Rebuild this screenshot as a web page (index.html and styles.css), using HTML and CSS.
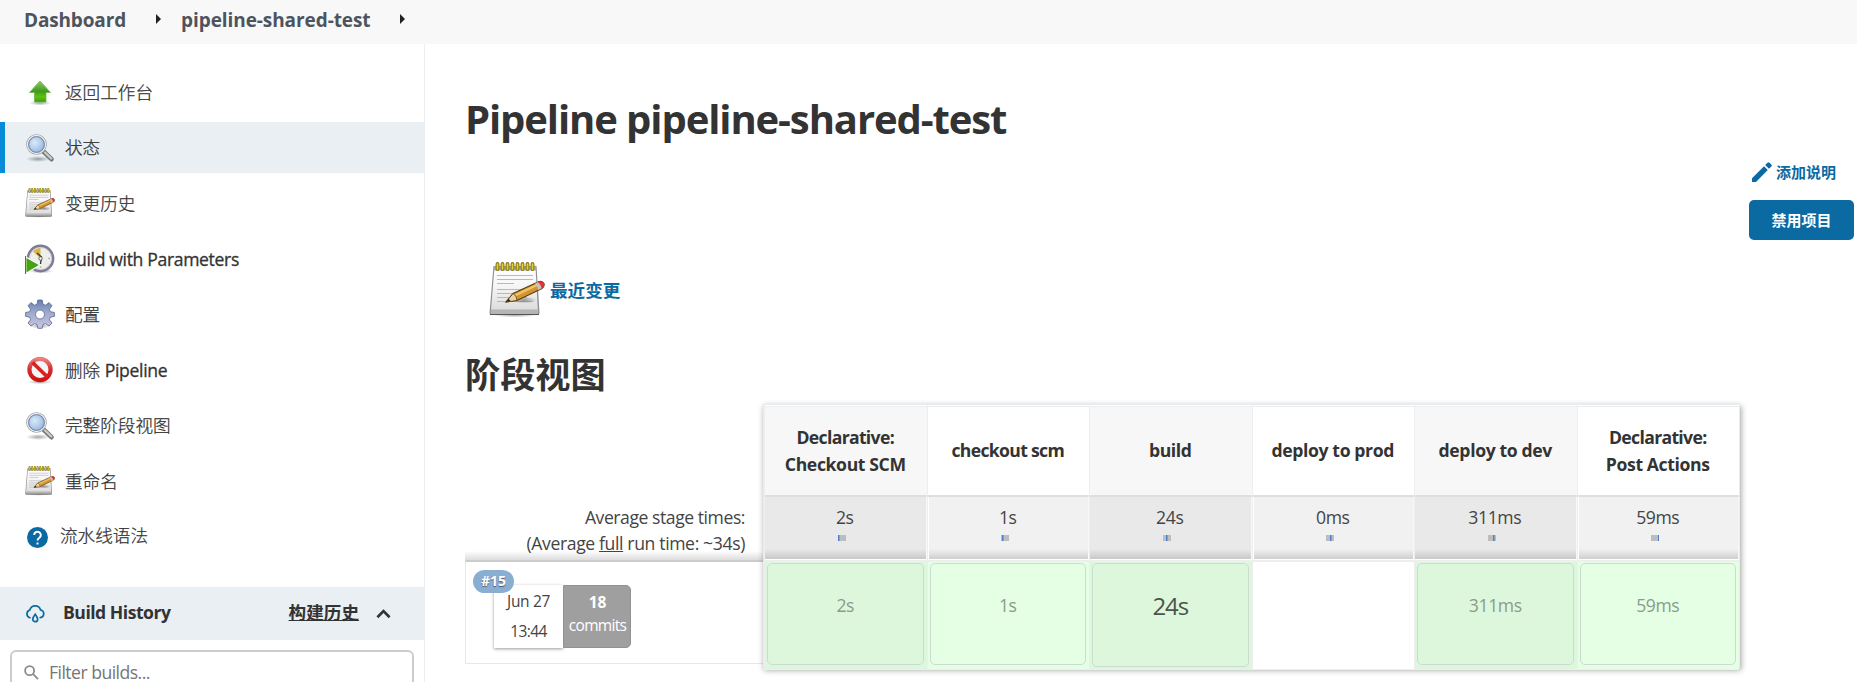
FILE: index.html
```html
<!DOCTYPE html>
<html lang="zh-CN">
<head>
<meta charset="utf-8">
<title>pipeline-shared-test [Jenkins]</title>
<link rel="stylesheet" href="styles.css">
</head>
<body>
<svg class="defs" width="0" height="0" aria-hidden="true">
  <defs>
    <linearGradient id="gGreen" x1="0" y1="0" x2="0" y2="1"><stop offset="0" stop-color="#8fc96a"/><stop offset=".5" stop-color="#3f9a1c"/><stop offset=".75" stop-color="#5cc40f"/><stop offset="1" stop-color="#3d9a10"/></linearGradient>
    <linearGradient id="gPaper" x1="0" y1="0" x2="0" y2="1"><stop offset="0" stop-color="#fff"/><stop offset=".4" stop-color="#f6f6f6"/><stop offset="1" stop-color="#d9d9d9"/></linearGradient>
    <linearGradient id="gGear" x1="0" y1="0" x2="0" y2="1"><stop offset="0" stop-color="#5f7fae"/><stop offset=".45" stop-color="#9fabcb"/><stop offset="1" stop-color="#cbc4e2"/></linearGradient>
    <linearGradient id="gRed" x1="0" y1="0" x2="0" y2="1"><stop offset="0" stop-color="#e98080"/><stop offset=".5" stop-color="#d42c2c"/><stop offset="1" stop-color="#d01414"/></linearGradient>
    <radialGradient id="gLens" cx=".4" cy=".4" r=".65"><stop offset="0" stop-color="#dbe9f8"/><stop offset="1" stop-color="#8fb4de"/></radialGradient>
    <radialGradient id="gShade"><stop offset="0" stop-color="#000" stop-opacity=".35"/><stop offset="1" stop-color="#000" stop-opacity="0"/></radialGradient>
  </defs>
  <symbol id="up" viewBox="0 0 30 30">
    <ellipse cx="15" cy="26" rx="11" ry="2.5" fill="url(#gShade)"/>
    <path d="M15 4 25.500 15.500H21V25H9.500v-9.500H4.500z" fill="url(#gGreen)" stroke="#6db548" stroke-width=".8"/>
  </symbol>
  <symbol id="search" viewBox="0 0 30 30">
    <ellipse cx="13" cy="26" rx="12" ry="3" fill="url(#gShade)"/>
    <path d="m18.500 18.500 8 7.700" stroke="#777" stroke-width="4.600" stroke-linecap="round"/>
    <path d="m20 19.500 6.300 6" stroke="#ccc" stroke-width="2.200" stroke-linecap="round"/>
    <circle cx="11.500" cy="11.500" r="9" fill="url(#gLens)" stroke="#9a9a9a" stroke-width="2.600"/>
    <circle cx="11.500" cy="11.500" r="9" fill="none" stroke="#eee" stroke-width="1.300"/>
    <circle cx="11.500" cy="11.500" r="7.800" fill="none" stroke="#5d85bd" stroke-width=".9"/>
  </symbol>
  <symbol id="notepad" viewBox="0 0 56 56">
    <ellipse cx="26" cy="53" rx="22" ry="2.500" fill="url(#gShade)"/>
    <path d="M4.500 4h43l3 47q0 2-2 2h-46q-2 0-2-2z" fill="#8c8c8c"/>
    <path d="M5.500 5h41l2.600 46.500H1.700z" fill="url(#gPaper)"/>
    <path d="M5 4.500h42l.2 4H4.500z" fill="#aaa"/>
    <path d="M2 47.500h47.300v3.500H2z" fill="#b5b5b5"/>
    <path d="M1 52.500h49" stroke="#555"/>
    <path d="M8 13.500h36M8 17.500h36M8 21.500h17M8 27.500h36M8 31.500h33M8 35.500h30M8 39.500h36" stroke="#b9b9b9" stroke-width="1.200"/>
    <path d="M8.500 2v5M13.500 2v5M18.500 2v5M23.500 2v5M28.500 2v5M33.500 2v5M38.500 2v5M43.500 2v5" stroke="#857716" stroke-width="3.800" stroke-linecap="round"/>
    <path d="M8.500 2v5M13.500 2v5M18.500 2v5M23.500 2v5M28.500 2v5M33.500 2v5M38.500 2v5M43.500 2v5" stroke="#e3d02c" stroke-width="1.700" stroke-linecap="round"/>
    <ellipse cx="35" cy="38" rx="13" ry="3.500" fill="url(#gShade)"/>
    <path d="m17 40 7-8.500L49 20q4-2 6 1.500.8 3-2 5L28 38.500z" fill="#d3962f" stroke="#5a3c10" stroke-width="1.100"/>
    <path d="m26 33.500 23-11" stroke="#efc56b" stroke-width="2"/>
    <path d="m17 40 7-8.500q4 2 4 7z" fill="#ead3a0" stroke="#5a3c10" stroke-width=".8"/>
    <path d="m17 40 2.500-3.200 2 2.200z" fill="#222"/>
    <path d="m46 21.500 3-1.500q3 3 3.500 6.500L49 28q0-4-3-6.500z" fill="#bfc4cc"/>
    <path d="M49 20q4-2 6 1.500.8 3-2 5-1-4-4-6.500z" fill="#e5303a"/>
  </symbol>
  <symbol id="clock" viewBox="0 0 30 30">
    <ellipse cx="16" cy="27" rx="12" ry="2.500" fill="url(#gShade)"/>
    <circle cx="15.500" cy="14.500" r="12.600" fill="#efefea" stroke="#7d7b98" stroke-width="2.600"/>
    <circle cx="15.500" cy="14.500" r="11" fill="none" stroke="#c9c9cf" stroke-width=".8"/>
    <path d="M15.500 14.500 8 7.500q3-3.500 7.500-3.500z" fill="#dcb54a"/>
    <path d="m12 9 4.500 4-1 7" fill="none" stroke="#333" stroke-width="1.300"/>
    <circle cx="15.500" cy="14.500" r="1.700" fill="#fff" stroke="#444" stroke-width=".8"/>
    <circle cx="24" cy="14.500" r=".8" fill="#999"/><circle cx="15.500" cy="23" r=".8" fill="#999"/>
    <path d="M.8 13v16.500L15 21z" fill="#46a313" stroke="#fff" stroke-width="1.200"/>
    <path d="M.5 12v18" stroke="#398a10" stroke-width="1"/>
  </symbol>
  <symbol id="gear" viewBox="0 0 30 30">
    <ellipse cx="15" cy="27" rx="11" ry="2.500" fill="url(#gShade)"/>
    <path fill-rule="evenodd" d="M12.800 1h4.400l.8 4.300 2.500 1L24 3.600 27 6.700l-2.600 3.500 1 2.500 4 .8v3.800l-4 .9-1 2.500L27 24.100 24 27l-3.500-2.400-2.500 1-.8 3.700h-4.400l-.8-3.700-2.500-1L6 27l-3-2.900 2.600-3.400-1-2.500-4-.9v-3.800l4-.8 1-2.500L3 6.700l3-3.100 3.500 2.700 2.500-1zM15 11a4.500 4.500 0 1 0 0 9 4.500 4.500 0 0 0 0-9z" fill="url(#gGear)" stroke="#64729b" stroke-width=".9"/>
  </symbol>
  <symbol id="stop" viewBox="0 0 30 30">
    <ellipse cx="15" cy="27" rx="12" ry="2.200" fill="url(#gShade)"/>
    <circle cx="15" cy="14.500" r="10.600" fill="#f6f4f4" stroke="url(#gRed)" stroke-width="4.200"/>
    <path d="m7.500 7.500 15 14.500" stroke="#d62222" stroke-width="3.800"/>
  </symbol>
</svg>

<header class="crumbs">
  <a class="crumb">Dashboard</a><i class="crumb-arrow"></i>
  <a class="crumb job">pipeline-shared-test</a><i class="crumb-arrow last"></i>
</header>

<div class="page">
  <aside class="sidebar">
    <nav class="tasks">
      <a class="task"><svg class="task-icon"><use href="#up"/></svg><span>返回工作台</span></a>
      <a class="task active"><svg class="task-icon"><use href="#search"/></svg><span>状态</span></a>
      <a class="task"><svg class="task-icon"><use href="#notepad"/></svg><span>变更历史</span></a>
      <a class="task latin"><svg class="task-icon"><use href="#clock"/></svg><span><b>Build with Parameters</b></span></a>
      <a class="task"><svg class="task-icon"><use href="#gear"/></svg><span>配置</span></a>
      <a class="task latin"><svg class="task-icon"><use href="#stop"/></svg><span>删除 <b>Pipeline</b></span></a>
      <a class="task"><svg class="task-icon"><use href="#search"/></svg><span>完整阶段视图</span></a>
      <a class="task"><svg class="task-icon"><use href="#notepad"/></svg><span>重命名</span></a>
      <a class="task help"><svg class="help-icon" viewBox="0 0 21 21"><circle cx="10.500" cy="10.500" r="10.500" fill="#0b6aa2"/><path d="M7.200 8a3.300 3.300 0 1 1 5.200 2.700c-1.200.9-1.900 1.400-1.900 2.800" fill="none" stroke="#fff" stroke-width="2"/><path d="M9.500 15.500h2v2h-2z" fill="#fff"/></svg><span>流水线语法</span></a>
    </nav>
    <section class="history">
      <div class="history-head">
        <svg class="cloud" viewBox="0 0 20 19" fill="none" stroke="#0b6aa2" stroke-width="1.700" stroke-linecap="round"><path d="M5 13.700A4 4 0 0 1 4.800 6 5.600 5.600 0 0 1 15.600 6a3.900 3.900 0 0 1-.4 7.700"/><path d="M10.200 10.200c1.500 2 2.500 3.500 2.500 5a2.500 2.500 0 0 1-5 0c0-1.500 1-3 2.500-5z"/></svg>
        <span class="history-title">Build History</span>
        <a class="trend">构建历史</a>
        <svg class="chevron" viewBox="0 0 16 10"><path d="m1.500 8.500 6.500-6.500 6.500 6.500" fill="none" stroke="#333" stroke-width="2.800"/></svg>
      </div>
      <div class="filter">
        <svg class="filter-icon" viewBox="0 0 16 16" fill="none" stroke="#8b8b8b" stroke-width="1.900"><circle cx="6" cy="6" r="4.800"/><path d="m9.500 9.500 5.500 5.500"/></svg>
        <span class="filter-text">Filter builds...</span>
      </div>
    </section>
  </aside>

  <main class="main">
    <h1 class="title">Pipeline pipeline-shared-test</h1>
    <div class="actions">
      <a class="edit"><svg class="pencil" viewBox="0 0 20 20" fill="#0b6aa2"><path d="M0 16.200 12 4.200 15.800 8 4 20H0zM13.200 3 15.500.7q1-1 2 0l1.800 1.800q1 1 0 2L17 6.800z"/></svg>添加说明</a>
      <button class="disable">禁用项目</button>
    </div>
    <a class="recent"><svg class="recent-icon"><use href="#notepad"/></svg>最近变更</a>
    <h2 class="subtitle">阶段视图</h2>

    <div class="stage-view">
      <div class="runs">
        <div class="averages"><span class="tight">Average stage times:</span><span>(Average <u>full</u> run time: ~34s)</span></div>
        <div class="run">
          <div class="run-card">
            <span class="badge">#15</span>
            <div class="date"><span>Jun 27</span><span class="time">13:44</span></div>
            <div class="commits"><b>18</b><span>commits</span></div>
          </div>
        </div>
      </div>
      <div class="stages">
        <div class="stage"><div class="name"><span class="tight">Declarative:</span><span>Checkout SCM</span></div><div class="avg">2s<i class="bar p0"></i></div><div class="cell"><div class="result">2s</div></div></div>
        <div class="stage even"><div class="name"><span class="tight">checkout scm</span></div><div class="avg">1s<i class="bar p1"></i></div><div class="cell"><div class="result">1s</div></div></div>
        <div class="stage"><div class="name"><span>build</span></div><div class="avg">24s<i class="bar p2"></i></div><div class="cell"><div class="result long">24s</div></div></div>
        <div class="stage even"><div class="name"><span>deploy to prod</span></div><div class="avg">0ms<i class="bar p3"></i></div><div class="cell empty"></div></div>
        <div class="stage"><div class="name"><span>deploy to dev</span></div><div class="avg">311ms<i class="bar p4"></i></div><div class="cell"><div class="result">311ms</div></div></div>
        <div class="stage even"><div class="name"><span class="tight">Declarative:</span><span>Post Actions</span></div><div class="avg">59ms<i class="bar p5"></i></div><div class="cell"><div class="result">59ms</div></div></div>
      </div>
    </div>
  </main>
</div>
</body>
</html>
```
FILE: styles.css
```css
* { box-sizing: border-box; }
body {
  margin: 0;
  height: 682px;
  overflow: hidden;
  background: #fff;
  color: #333;
  font: 17.6px/26px "Open Sans", "Noto Sans CJK SC", sans-serif;
}
.defs { position: absolute; }

.crumbs {
  display: flex;
  align-items: center;
  height: 44px;
  padding: 0 0 4px 24px;
  background: #f8f8f8;
}
.crumb { color: #4d545d; font-weight: 700; font-size: 19px; letter-spacing: -.15px; }
.crumb.job { letter-spacing: -.08px; }
.crumb-arrow {
  margin: 0 20px 2px 30px;
  border: solid transparent;
  border-width: 5px 0 5px 5px;
  border-left-color: #222;
}
.crumb-arrow.last { margin-left: 29px; }

.page { display: flex; height: 638px; }
.sidebar { width: 425px; flex: none; border-right: 1px solid #eaeff2; }
.tasks { display: flex; flex-direction: column; gap: 4.6px; padding-top: 22.500px; height: 543px; }
.task { display: flex; align-items: center; gap: 10px; height: 51px; padding-left: 25px; font-weight: 300; -webkit-text-stroke: .25px #333; flex: none; }
.task span { padding-bottom: 1px; }
.task.latin span { padding-bottom: 0; padding-top: 1px; }
.task.active { background: #e9eff2; border-left: 5px solid #078ad8; padding-left: 20px; }
.task-icon { width: 30px; height: 30px; }
.task b { font-weight: 400; letter-spacing: -.35px; -webkit-text-stroke: .3px #333; }
.help { padding: 0 0 2px 27px; gap: 12px; }
.help-icon { width: 21px; height: 21px; margin-top: 4px; }

.history-head { display: flex; align-items: center; height: 53px; padding: 0 33px 0 25px; background: #e9eff2; font-weight: 700; }
.cloud { width: 20px; height: 19px; margin-right: 18px; }
.history-title { letter-spacing: -.5px; padding-bottom: 4px; }
.trend { margin-left: auto; text-decoration: underline; padding-bottom: 4px; }
.chevron { width: 15px; height: 10px; margin-left: 17px; }
.filter { display: flex; align-items: center; height: 45px; margin: 10px 10px 0; padding: 0 12px; border: 2px solid #ccc; border-radius: 6px; color: #757575; }
.filter-icon { width: 15px; height: 15px; margin-right: 10px; }
.filter-text { letter-spacing: -.53px; padding-bottom: 1px; }

.main { flex: 1; padding: 0 3px 0 40px; display: flex; flex-direction: column; }
.title { margin: 45px 0 0; font-size: 40px; line-height: 60px; font-weight: 700; letter-spacing: -1.1px; }
.actions { display: flex; flex-direction: column; align-items: flex-end; margin-top: 10px; color: #0b6aa2; font-size: 15px; font-weight: 700; }
.edit { display: flex; align-items: center; gap: 4px; padding-right: 18px; }
.pencil { width: 20px; height: 20px; }
.disable { width: 105px; height: 40px; margin-top: 15px; border: 0; border-radius: 5px; background: #0b6aa2; color: #fff; font: inherit; }
.recent { display: flex; align-items: center; gap: 5px; margin: 22px 0 0 24px; color: #0b6aa2; font-weight: 700; height: 56px; }
.recent-icon { width: 56px; height: 56px; }
.subtitle { margin: 30px 0 0; font-size: 35.2px; line-height: 52px; font-weight: 700; height: 56px; }

.stage-view { display: flex; align-items: flex-start; color: #444; }
.runs { width: 298px; padding-top: 93px; }
.averages { display: flex; flex-direction: column; align-items: flex-end; height: 63px; padding: 7px 18px 0 0; background: linear-gradient(transparent 54px, #dcdcdc); letter-spacing: -.37px; }
.averages .tight { letter-spacing: -.45px; }
.run { height: 104px; border: 1px solid #e8e8e8; border-top: 2px solid #ccc; border-right: 0; padding: 23px 0 0 28px; }
.run-card { position: relative; display: flex; width: 137px; height: 63px; font-size: 15.500px; text-align: center; }
.badge { position: absolute; left: -21px; top: -15px; width: 41px; height: 23px; border-radius: 12px; background: #8aaed2; color: #fff; font: 700 14px/22px "Open Sans", sans-serif; text-shadow: 0 1px 1px #456; }
.date { width: 69px; display: flex; flex-direction: column; line-height: 30px; padding-top: 1px; background: #fff; box-shadow: 0 1px 3px rgba(0,0,0,.4); letter-spacing: -.35px; }
.time { letter-spacing: -.6px; }
.commits { width: 68px; display: flex; flex-direction: column; line-height: 23px; padding: 5px 0 0 1px; background: #9f9f9f; color: #fff; border: 1px solid #929292; border-radius: 0 5px 5px 0; }
.commits span { letter-spacing: -.7px; }

.stages { display: grid; grid-template-columns: repeat(6, 1fr); width: 977px; height: 264px; border: 1px solid #e4edf1; border-bottom-color: #ddd; box-shadow: 1px 2px 6px rgba(0,0,0,.38); background: #fff; }
.stage { display: flex; flex-direction: column; border-left: 1px solid #eee; padding-top: 1px; }
.name { height: 91px; border-top: 1px solid #eee; border-bottom: 2px solid #dedede; padding: 0 1px 1px 0; background: #f7f7f7; color: #333; font-weight: 700; line-height: 27px; letter-spacing: -.37px; display: flex; flex-direction: column; justify-content: center; align-items: center; }
.name .tight { letter-spacing: -.67px; }
.avg { height: 62px; padding: 7px 1px 0 0; letter-spacing: -.4px; background: linear-gradient(transparent 52px, rgba(0,0,0,.14)), #e9e9e9; display: flex; flex-direction: column; align-items: center; border-right: 1px solid #f8f8f8; }
.bar { width: 8px; height: 6px; margin: 5px 5px 0 0; background: linear-gradient(#4a80d4, #4a80d4) no-repeat #bdbdbd; background-size: 1.500px 6px; }
.p0 { background-position: 0 0; } .p1 { background-position: 1px 0; } .p2 { background-position: 3px 0; }
.p3 { background-position: 4px 0; } .p4 { background-position: 5px 0; } .p5 { background-position: 7px 0; }
.cell { flex: 1; margin-top: 1px; border-top: 2px solid #eee; border-bottom: 1px solid #eee; background: #ddf7dd; padding: 1px 3px 2px 2px; }
.result { height: 102px; border: 1px solid #cbdccf; border-radius: 5px; text-align: center; line-height: 83px; letter-spacing: -.4px; color: #8b9b8b; }
.result.long { font-size: 24px; color: #4c554c; height: 104px; letter-spacing: -1.200px; }
.even .name { background: #fff; }
.even .avg { background-color: #f1f1f1; border-left: 1px solid #fff; }
.even .cell { background: #e4ffe4; }
.even .cell.empty { background: #fff; }
```
